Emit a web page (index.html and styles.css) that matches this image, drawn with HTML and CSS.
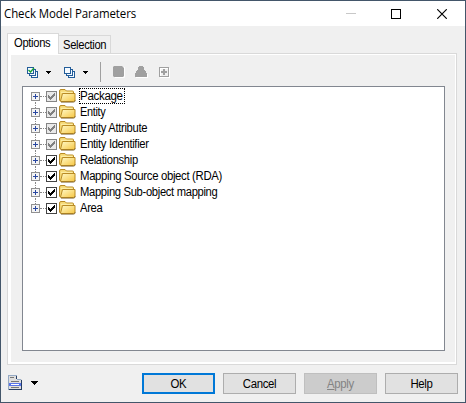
FILE: index.html
```html
<!DOCTYPE html>
<html lang="en">
<head>
<meta charset="utf-8">
<title>Check Model Parameters</title>
<link rel="stylesheet" href="styles.css">
</head>
<body>
<svg class="defs" width="0" height="0" shape-rendering="crispEdges">
  <defs>
    <linearGradient id="gold" x1="0" y1="0" x2="1" y2="1"><stop offset="0" stop-color="#fffac8"/><stop offset="1" stop-color="#f6c644"/></linearGradient>
    <symbol id="expander" viewBox="0 0 9 9"><rect x=".5" y=".5" width="8" height="8" fill="#f4f4f4" stroke="#919191"/><path d="M2 4.5h5M4.5 2v5" stroke="#2947a0"/></symbol>
    <symbol id="checked" viewBox="0 0 11 11"><rect x=".5" y=".5" width="10" height="10" fill="#fff" stroke="#444"/><path d="M2 4v3M3 5v3M4 6v3M5 5v3M6 4v3M7 3v3M8 2v3" transform="translate(.5 0)" stroke="#000"/></symbol>
    <symbol id="mixed" viewBox="0 0 11 11"><rect x=".5" y=".5" width="10" height="10" fill="#e9e9e9" stroke="#858585"/><path d="M2 4v3M3 5v3M4 6v3M5 5v3M6 4v3M7 3v3M8 2v3" transform="translate(.5 0)" stroke="#808080"/></symbol>
    <symbol id="folder" viewBox="0 0 17 14"><g shape-rendering="geometricPrecision"><path d="M.5 11V2Q.5.5 2 .5h4L7.5 2H13.500q1 0 1 1v9H2Q.5 12 .5 11z" fill="#f5d874" stroke="#b98b25"/><path d="M2 3.300h11.500" stroke="#fff3b0"/><path d="M1.500 12.200L3.500 4.500H16v6.500q0 1.500-1.500 1.500H2z" fill="url(#gold)" stroke="#b98b25"/><path d="M2 13.200h12.500q1.500 0 1.800-2" fill="none" stroke="#71551b" stroke-width=".7"/></g></symbol>
    <symbol id="stack" viewBox="0 0 11 11"><g fill="#f5faff" stroke="#235d99"><rect x="4.5" y="4.5" width="6" height="6"/><rect x="2.5" y="2.5" width="6" height="6"/><rect x=".5" y=".5" width="6" height="6"/></g></symbol>
    <symbol id="arrow" viewBox="0 0 5 3"><path d="M0 0h5v1H4v1H3v1H2V2H1V1H0z"/></symbol>
  </defs>
</svg>
<div class="window">
  <header class="titlebar">
    <h1>Check Model Parameters</h1>
    <svg width="12" height="11" shape-rendering="crispEdges"><path d="M0 5.5h10" stroke="#c8c8c8"/></svg>
    <svg width="10" height="10" shape-rendering="crispEdges"><rect x=".5" y=".5" width="9" height="9" fill="none" stroke="#000"/></svg>
    <svg width="10" height="10"><path d="M.2.2l9.6 9.6M9.8.2L.2 9.8" stroke="#000" stroke-width="1.15"/></svg>
  </header>
  <nav class="tabs"><div class="tab active"><span>Options</span></div><div class="tab"><span>Selection</span></div></nav>
  <main class="page">
    <div class="surface">
      <div class="toolbar">
        <svg class="stack" width="11" height="11" shape-rendering="crispEdges"><use href="#stack" width="11" height="11"/><path d="M1.500 3l2 2 3.500-4" stroke="#16a232" stroke-width="1.4" fill="none" shape-rendering="geometricPrecision"/></svg>
        <svg class="arrow" width="5" height="3" shape-rendering="crispEdges"><use href="#arrow"/></svg>
        <svg class="stack second" width="11" height="11" shape-rendering="crispEdges"><use href="#stack" width="11" height="11"/></svg>
        <svg class="arrow" width="5" height="3" shape-rendering="crispEdges"><use href="#arrow"/></svg>
        <i class="separator"></i>
        <svg class="disabled-square" width="13" height="13"><path d="M2 1h10v10l-1 1H2z" fill="#fff"/><path d="M1 0h8l1 1 1 1v8l-1 1H1l-1-1V1z" fill="#a0a0a0"/></svg>
        <svg class="disabled-person" width="13" height="13" shape-rendering="crispEdges"><path d="M1 12h12V8H1z" fill="#fff"/><path d="M4 0h4v1h1v3h1v1h1v2h1v4H0V7h1V5h1V4h1V1h1z" fill="#a0a0a0"/></svg>
        <svg width="11" height="11" shape-rendering="crispEdges"><path d="M1.5 1.5h9v9h-9z" fill="none" stroke="#fff"/><path d="M.5.5h9v9h-9z" fill="none" stroke="#a0a0a0"/><path d="M2 4h2V2h2v2h2v2H6v2H4V6H2z" fill="#a0a0a0"/></svg>
      </div>
      <ul class="tree">
        <li><svg class="expander"><use href="#expander"/></svg><i></i><svg class="check"><use href="#mixed"/></svg><svg class="folder"><use href="#folder"/></svg><span class="label focused"><span>Package</span></span></li>
        <li><svg class="expander"><use href="#expander"/></svg><i></i><svg class="check"><use href="#mixed"/></svg><svg class="folder"><use href="#folder"/></svg><span class="label short"><span>Entity</span></span></li>
        <li><svg class="expander"><use href="#expander"/></svg><i></i><svg class="check"><use href="#mixed"/></svg><svg class="folder"><use href="#folder"/></svg><span class="label"><span>Entity Attribute</span></span></li>
        <li><svg class="expander"><use href="#expander"/></svg><i></i><svg class="check"><use href="#mixed"/></svg><svg class="folder"><use href="#folder"/></svg><span class="label"><span>Entity Identifier</span></span></li>
        <li><svg class="expander"><use href="#expander"/></svg><i></i><svg class="check"><use href="#checked"/></svg><svg class="folder"><use href="#folder"/></svg><span class="label"><span>Relationship</span></span></li>
        <li><svg class="expander"><use href="#expander"/></svg><i></i><svg class="check"><use href="#checked"/></svg><svg class="folder"><use href="#folder"/></svg><span class="label wide"><span>Mapping Source object (RDA)</span></span></li>
        <li><svg class="expander"><use href="#expander"/></svg><i></i><svg class="check"><use href="#checked"/></svg><svg class="folder"><use href="#folder"/></svg><span class="label"><span>Mapping Sub-object mapping</span></span></li>
        <li><svg class="expander"><use href="#expander"/></svg><i></i><svg class="check"><use href="#checked"/></svg><svg class="folder"><use href="#folder"/></svg><span class="label"><span>Area</span></span></li>
      </ul>
    </div>
  </main>
  <footer class="footer">
    <svg class="menu-icon" width="14" height="15" shape-rendering="crispEdges"><path d="M0 0h9v4h5v11H0z" fill="#dedede"/><path d="M.5 15V.5H9M9 4.500h4" fill="none" stroke="#94a9c4"/><path d="M8.5 1v3M13.500 5v9.500H1" fill="none" stroke="#263d63"/><path d="M1 8h12v3H1z" fill="#5874e8"/><path d="M2 2.500h4M3 6.500h8M3 12.500h8" stroke="#777"/><path d="M3 9.500h8" stroke="#fff"/></svg>
    <svg class="menu-arrow" width="7" height="4" shape-rendering="crispEdges"><path d="M0 0h7v1H6v1H5v1H4v1H3V3H2V2H1V1H0z"/></svg>
    <div class="buttons">
      <button class="primary"><span>OK</span></button><button><span>Cancel</span></button><button disabled><span><u>A</u>pply</span></button><button><span>Help</span></button>
    </div>
  </footer>
</div>
</body>
</html>
```
FILE: styles.css
```css
* { box-sizing: border-box; }
body { margin: 0; overflow: hidden; font: 12px/16px "Liberation Sans", sans-serif; color: #000; }
svg { display: block; flex: none; }
.defs { position: absolute; }
.window { width: 466px; height: 403px; background: #f0f0f0; border: 1px solid #43566a; display: flex; flex-direction: column; }
.titlebar { height: 25px; flex: none; background: #fff; display: flex; align-items: center; padding: 0 18px 0 3px; }
.titlebar h1 { margin: 0 auto 0 0; font: 12px/24px "Open Sans", sans-serif; letter-spacing: -.07px; white-space: nowrap; transform: scaleX(.955); transform-origin: left; }
.titlebar svg + svg { margin-left: 33px; }
.titlebar svg:last-child { margin-left: 36px; }
.tabs { display: flex; align-items: flex-end; height: 27px; flex: none; padding-left: 6px; }
.tab { height: 18px; width: 52px; border: 1px solid #d9d9d9; border-bottom: 0; border-left: 0; padding-left: 4px; line-height: 18px; white-space: nowrap; letter-spacing: -.35px; }
.tab.active { position: relative; height: 21px; border-left: 1px solid #d9d9d9; background: #fff; margin-bottom: -1px; padding-left: 6px; line-height: 18px; }
.tab span, .label span { display: block; width: max-content; transform: scaleX(.935); transform-origin: left; }
.page { width: 450px; height: 312px; margin-left: 6px; border: 1px solid #d9d9d9; background: #fff; padding: 1px 1px 2px 3px; flex: none; }
.surface { height: 307px; background: #f0f0f0; padding: 7px 11px 0; }
.toolbar { display: flex; align-items: center; height: 20px; margin-bottom: 4px; padding-left: 5px; }
.arrow { margin-left: 8px; }
.second { margin-left: 13px; }
.separator { width: 1px; height: 20px; margin: 0 12px; background: #a0a0a0; }
.disabled-person { margin: 0 11px 0 9px; }
.tree { list-style: none; width: 423px; height: 265px; margin: 0; padding: 1px 0 0 8px; border: 1px solid #828790; background: #fff; }
.tree li { height: 16px; display: flex; align-items: center; position: relative; }
.tree li:not(:last-child)::after { content: ""; position: absolute; left: 4px; top: 14px; height: 6px; border-left: 1px dotted #888; }
.tree i { width: 6px; border-top: 1px dotted #888; margin-top: 1px; }
.expander { width: 9px; height: 9px; margin-top: 1px; }
.check { width: 11px; height: 11px; }
.folder { width: 17px; height: 14px; margin-left: 2px; }
.label { height: 16px; margin-left: 3px; padding: 0 1px; line-height: 16px; letter-spacing: -.35px; white-space: nowrap; }
.label.focused span { transform: scaleX(.965); }
.label.short span { transform: scaleX(.91); }
.label.wide span { transform: scaleX(.947); }
.focused { width: 46px; outline: 1px dotted #000; outline-offset: -1px; }
.footer { display: flex; padding: 8px 7px 0; }
.menu-icon { margin-top: 2px; }
.menu-arrow { margin: 8px 0 0 9px; }
.buttons { display: flex; gap: 8px; margin-left: auto; }
button { width: 73px; height: 21px; padding: 0; border: 1px solid #adadad; background: #e1e1e1; color: #000; font: 12px/18px "Liberation Sans", sans-serif; letter-spacing: -.35px; }
button span { display: block; transform: scaleX(.95); }
button.primary { border: 2px solid #0078d7; line-height: 16px; }
button:disabled { background: #ccc; border-color: #bfbfbf; color: #838383; }
```
